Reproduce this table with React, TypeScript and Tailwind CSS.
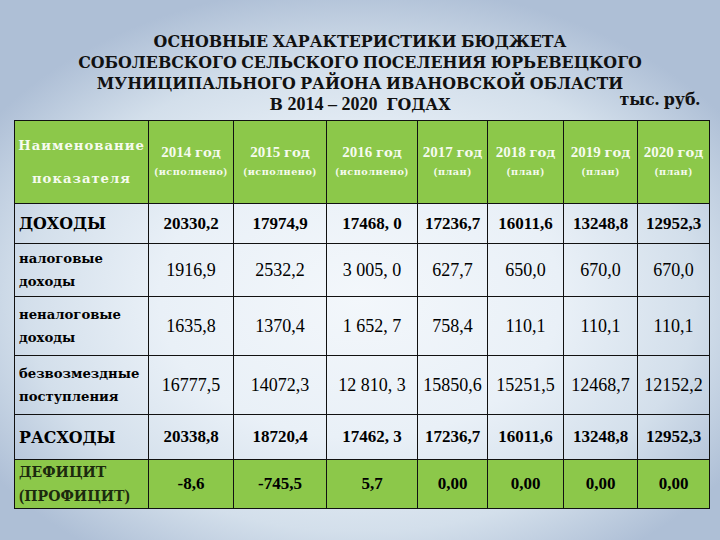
import React from "react";

const cols = [134, 85, 93, 91, 70, 76, 74, 72];

const CYR = /([А-Яа-яЁё]+)/;

function M({ t }: { t: string }) {
  const parts = t.split(CYR);
  return (
    <>
      {parts.map((p, i) =>
        p === "" ? null : /[А-Яа-яЁё]/.test(p) ? (
          <span key={i} className="font-['DejaVu_Serif'] text-[0.88em]">
            {p}
          </span>
        ) : (
          <span key={i} className="whitespace-pre">{p}</span>
        )
      )}
    </>
  );
}

const years = [
  ["2014 год", "(исполнено)"],
  ["2015 год", "(исполнено)"],
  ["2016 год", "(исполнено)"],
  ["2017 год", "(план)"],
  ["2018 год", "(план)"],
  ["2019 год", "(план)"],
  ["2020 год", "(план)"],
];

type Row = {
  label: string[];
  values: string[];
  kind: "main" | "sub" | "deficit";
  h: number;
};

const rows: Row[] = [
  {
    label: ["ДОХОДЫ"],
    values: ["20330,2", "17974,9", "17468, 0", "17236,7", "16011,6", "13248,8", "12952,3"],
    kind: "main",
    h: 40,
  },
  {
    label: ["налоговые", "доходы"],
    values: ["1916,9", "2532,2", "3 005, 0", "627,7", "650,0", "670,0", "670,0"],
    kind: "sub",
    h: 53,
  },
  {
    label: ["неналоговые", "доходы"],
    values: ["1635,8", "1370,4", "1 652, 7", "758,4", "110,1", "110,1", "110,1"],
    kind: "sub",
    h: 59,
  },
  {
    label: ["безвозмездные", "поступления"],
    values: ["16777,5", "14072,3", "12 810, 3", "15850,6", "15251,5", "12468,7", "12152,2"],
    kind: "sub",
    h: 59,
  },
  {
    label: ["РАСХОДЫ"],
    values: ["20338,8", "18720,4", "17462, 3", "17236,7", "16011,6", "13248,8", "12952,3"],
    kind: "main",
    h: 45,
  },
  {
    label: ["ДЕФИЦИТ", "(ПРОФИЦИТ)"],
    values: ["-8,6", "-745,5", "5,7", "0,00", "0,00", "0,00", "0,00"],
    kind: "deficit",
    h: 47,
  },
];

export default function App() {
  return (
    <div className="w-[720px] h-[540px] overflow-hidden font-['Liberation_Serif'] text-black bg-[radial-gradient(ellipse_62%_58%_at_50%_55%,#f3f7fb_0%,#e9f0f7_45%,#d3dfeb_75%,#aebfd6_100%)]">
      <div className="pt-[31px] flex flex-col items-center">
        <div className="text-[18px] leading-[20px] font-bold text-center text-[#111] whitespace-nowrap">
          <div><M t="ОСНОВНЫЕ ХАРАКТЕРИСТИКИ БЮДЖЕТА" /></div>
          <div><M t="СОБОЛЕВСКОГО СЕЛЬСКОГО ПОСЕЛЕНИЯ ЮРЬЕВЕЦКОГО" /></div>
          <div><M t="МУНИЦИПАЛЬНОГО РАЙОНА ИВАНОВСКОЙ ОБЛАСТИ" /></div>
        </div>
        <div className="w-full grid grid-cols-[1fr_auto_1fr] text-[18px] leading-[20px] font-bold text-[#111]">
          <div />
          <div className="whitespace-pre"><M t="В 2014 – 2020  ГОДАХ" /></div>
          <div className="flex justify-end pr-[20px] -mt-[5px]"><div><M t="тыс. руб." /></div></div>
        </div>
      </div>
      <table className="ml-[14px] mt-[5px] table-fixed border-collapse">
        <colgroup>
          {cols.map((w, i) => (
            <col key={i} style={{ width: w }} />
          ))}
        </colgroup>
        <thead>
          <tr className="h-[83px] bg-[#8cc84a]">
            <th className="border border-[#111] p-0 font-bold text-[#f6fbef] text-[15px] leading-[32px] tracking-[1px] text-center whitespace-nowrap">
              <div><M t="Наименование" /></div>
              <div><M t="показателя" /></div>
            </th>
            {years.map(([y, s], i) => (
              <th key={i} className="border border-[#111] p-0 text-[#f6fbef] text-center font-bold whitespace-nowrap">
                <div className="text-[15px] leading-[18px]"><M t={y} /></div>
                <div className="text-[11px] leading-[18px] tracking-[0.5px]"><M t={s} /></div>
              </th>
            ))}
          </tr>
        </thead>
        <tbody>
          {rows.map((r, ri) => (
            <tr
              key={ri}
              style={{ height: r.h }}
              className={r.kind === "deficit" ? "bg-[#8cc84a]" : ""}
            >
              <td
                className={
                  "border border-[#111] pl-[4px] pr-0 py-0 text-left font-bold whitespace-nowrap " +
                  (r.kind === "main"
                    ? "text-[18px] leading-[22px]"
                    : r.kind === "sub"
                    ? "text-[15px] leading-[22px]"
                    : "text-[16px] leading-[23px] text-[#1c2a0e]")
                }
              >
                {r.label.map((l, li) => (
                  <div key={li}><M t={l} /></div>
                ))}
              </td>
              {r.values.map((v, vi) => (
                <td
                  key={vi}
                  className={
                    "border border-[#111] p-0 text-center whitespace-nowrap " +
                    (r.kind === "sub" ? "text-[18px] font-normal" : "text-[17px] font-bold")
                  }
                >
                  {v}
                </td>
              ))}
            </tr>
          ))}
        </tbody>
      </table>
    </div>
  );
}
